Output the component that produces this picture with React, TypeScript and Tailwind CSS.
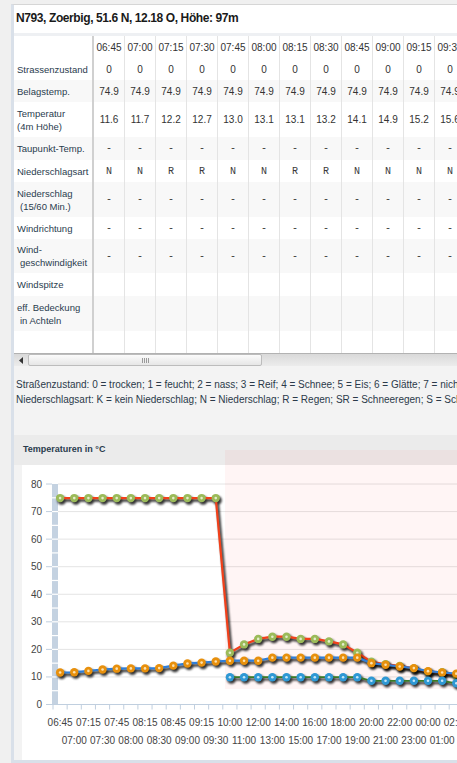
import React from "react";

const cols = ["06:45", "07:00", "07:15", "07:30", "07:45", "08:00", "08:15", "08:30", "08:45", "09:00", "09:15", "09:30", "09:45", "10:00"];

type Row = {
  label: React.ReactNode;
  h: string;
  values: string[];
  mono?: boolean;
  shaded: boolean;
};

const fill = (v: string) => cols.map(() => v);

const rows: Row[] = [
  { label: "Strassenzustand", h: "h-[22px]", values: fill("0"), shaded: false },
  { label: "Belagstemp.", h: "h-[22px]", values: fill("74.9"), shaded: true },
  {
    label: (
      <>
        Temperatur
        <br />
        (4m Höhe)
      </>
    ),
    h: "h-[35px]",
    values: ["11.6", "11.7", "12.2", "12.7", "13.0", "13.1", "13.1", "13.2", "14.1", "14.9", "15.2", "15.6", "15.8", "15.9"],
    shaded: false,
  },
  { label: "Taupunkt-Temp.", h: "h-[23px]", values: fill("-"), mono: true, shaded: true },
  {
    label: "Niederschlagsart",
    h: "h-[22px]",
    values: ["N", "N", "R", "R", "N", "N", "R", "R", "N", "N", "N", "N", "N", "N"],
    mono: true,
    shaded: false,
  },
  {
    label: (
      <>
        Niederschlag
        <br />
        <span className="pl-[3px]">(15/60 Min.)</span>
      </>
    ),
    h: "h-[35px]",
    values: fill("-"),
    mono: true,
    shaded: true,
  },
  { label: "Windrichtung", h: "h-[22px]", values: fill("-"), mono: true, shaded: false },
  {
    label: (
      <>
        Wind-
        <br />
        <span className="pl-[3px]">geschwindigkeit</span>
      </>
    ),
    h: "h-[34px]",
    values: fill("-"),
    mono: true,
    shaded: true,
  },
  { label: "Windspitze", h: "h-[23px]", values: fill(""), shaded: false },
  {
    label: (
      <>
        eff. Bedeckung
        <br />
        <span className="pl-[3px]">in Achteln</span>
      </>
    ),
    h: "h-[35px]",
    values: fill(""),
    shaded: true,
  },
  { label: "", h: "h-[22px]", values: fill(""), shaded: false },
];

function ForecastTable() {
  return (
    <div className="bg-white text-[#333]">
      <div className="flex h-[22px]">
        <div className="h-full w-[80px] shrink-0 border-r-2 border-[#d0d0d0]" />
        {cols.map((c) => (
          <div
            key={c}
            className="flex h-full w-[31px] shrink-0 items-center justify-center border-r border-[#e4e4e4] text-[10px]"
          >
            {c}
          </div>
        ))}
      </div>
      {rows.map((r, ri) => (
        <div key={ri} className={`flex ${r.h} ${r.shaded ? "bg-[#f8f8f8]" : "bg-white"}`}>
          <div className="flex h-full w-[80px] shrink-0 items-center whitespace-nowrap border-r-2 border-[#d0d0d0] pl-[3px] text-[9.5px] leading-[13px] text-[#2a3c4e]">
            <div>{r.label}</div>
          </div>
          {r.values.map((v, ci) => (
            <div
              key={ci}
              className={`flex h-full w-[31px] shrink-0 items-center justify-center border-r border-[#e4e4e4] ${
                r.mono ? "font-['Liberation_Mono',monospace] text-[10px] text-[#3a3a3a]" : "text-[10px]"
              }`}
            >
              {v}
            </div>
          ))}
        </div>
      ))}
    </div>
  );
}

function Scrollbar() {
  return (
    <div className="flex h-[13px] border-t border-[#b2b2b2] bg-gradient-to-b from-[#d9d9d9] to-[#ececec]">
      <div className="flex w-[14px] shrink-0 items-center justify-center">
        <svg width="4" height="7" viewBox="0 0 4 7">
          <path d="M4 0 L0 3.5 L4 7 Z" fill="#333" />
        </svg>
      </div>
      <div className="flex w-[234px] shrink-0 items-center justify-center gap-[1px] rounded-[2px] border border-[#bcbcbc] bg-gradient-to-b from-[#fbfbfb] to-[#e6e6e6]">
        <span className="h-[5px] w-[1px] bg-[#9a9a9a]" />
        <span className="h-[5px] w-[1px] bg-[#9a9a9a]" />
        <span className="h-[5px] w-[1px] bg-[#9a9a9a]" />
        <span className="h-[5px] w-[1px] bg-[#9a9a9a]" />
      </div>
    </div>
  );
}

function Legend() {
  return (
    <div className="h-[69px] whitespace-nowrap pl-[2px] pt-[11px] text-[10px] leading-[15px] text-[#2b3a4a]">
      <div>Straßenzustand: 0 = trocken; 1 = feucht; 2 = nass; 3 = Reif; 4 = Schnee; 5 = Eis; 6 = Glätte; 7 = nicht definiert</div>
      <div>Niederschlagsart: K = kein Niederschlag; N = Niederschlag; R = Regen; SR = Schneeregen; S = Schnee; G = Graupel</div>
    </div>
  );
}

const cats = [
  "06:45", "07:00", "07:15", "07:30", "07:45", "08:00", "08:15", "08:30", "08:45", "09:00", "09:15", "09:30",
  "10:00", "11:00", "12:00", "13:00", "14:00", "15:00", "16:00", "17:00", "18:00", "19:00", "20:00", "21:00",
  "22:00", "23:00", "00:00", "01:00", "02:00", "03:00",
];

const road: (number | null)[] = [
  ...Array(12).fill(74.9),
  18.8, 21.8, 23.8, 24.6, 24.6, 23.8, 23.8, 22.9, 21.8, 18.8, 15.5, 14.6, 14.0, 13.1, 11.9, 11.7, 10.6, 10.0,
];
const air: (number | null)[] = [
  11.6, 11.7, 12.2, 12.7, 13.0, 13.1, 13.1, 13.2, 14.1, 14.9, 15.2, 15.6,
  15.9, 15.9, 15.9, 17.0, 17.0, 17.0, 17.0, 17.0, 17.0, 17.0,
  15.0, 14.4, 13.8, 13.2, 12.1, 11.6, 11.2, 11.0,
];
const dew: (number | null)[] = [
  ...Array(12).fill(null),
  ...Array(10).fill(9.9),
  ...Array(6).fill(8.6),
  7.7, 7.5,
];

const X = (i: number) => 38.1 + 14.15 * i;
const Y = (v: number) => 239.5 - v * 2.756;

function Series({
  data,
  line,
  marker,
  dot,
  width,
}: {
  data: (number | null)[];
  line: string;
  marker: string;
  dot: string;
  width: number;
}) {
  const pts = data
    .map((v, i) => (v === null ? null : [X(i), Y(v)] as [number, number]))
    .filter((p): p is [number, number] => p !== null);
  const poly = pts.map((p) => `${p[0].toFixed(1)},${p[1].toFixed(1)}`).join(" ");
  return (
    <g>
      {/* soft dark shadow, offset down-right */}
      <g transform="translate(1.6 2.2)" filter="url(#soft)" opacity={0.8}>
        <polyline points={poly} fill="none" stroke="#000" strokeWidth={width + 0.6} strokeLinejoin="round" />
        {pts.map((p, i) => (
          <circle key={i} cx={p[0]} cy={p[1]} r={4.4} fill="#000" />
        ))}
      </g>
      <polyline points={poly} fill="none" stroke={line} strokeWidth={width} strokeLinejoin="round" />
      {pts.map((p, i) => (
        <g key={i}>
          <circle cx={p[0]} cy={p[1]} r={4.2} fill={marker} />
          <circle cx={p[0]} cy={p[1]} r={1.3} fill={dot} />
        </g>
      ))}
    </g>
  );
}

function TemperatureChart() {
  const grid = [0, 10, 20, 30, 40, 50, 60, 70, 80];
  const seps = Array.from({ length: 15 }, (_, j) => (j + 1) * 5);
  const ticks = Array.from({ length: 30 }, (_, k) => 31 + 14.15 * k);
  return (
    <svg width="435" height="295" viewBox="0 0 435 295" className="block">
      <defs>
        <filter id="soft" filterUnits="userSpaceOnUse" x="0" y="0" width="435" height="295">
          <feGaussianBlur stdDeviation="0.9" />
        </filter>
      </defs>

      {grid.slice(1).map((g) => (
        <line key={g} x1={36} x2={435} y1={Y(g)} y2={Y(g)} stroke="#e4e4e4" strokeWidth={1} />
      ))}

      <rect x={203} y={0} width={232} height={224} fill="#ff0000" opacity={0.04} />

      {grid.map((g) => (
        <g key={g}>
          <line x1={24} x2={30} y1={Y(g)} y2={Y(g)} stroke="#c0cfdf" strokeWidth={1} />
          <text
            x={20}
            y={Y(g) + 3.5}
            textAnchor="end"
            fontSize="10"
            fill="#444"
            fontFamily="'Liberation Sans', Arial, sans-serif"
          >
            {g}
          </text>
        </g>
      ))}

      <rect x={30} y={Y(80)} width={6} height={Y(0) - Y(80)} fill="#c4d2e1" />
      {seps.map((s) => (
        <line key={s} x1={30} x2={36} y1={Y(s)} y2={Y(s)} stroke="#fff" strokeWidth={1.2} />
      ))}

      <line x1={30} x2={435} y1={Y(0)} y2={Y(0)} stroke="#c0cfdf" strokeWidth={1} />
      {ticks.map((t, k) => (
        <line key={k} x1={t} x2={t} y1={Y(0)} y2={Y(0) + 5} stroke="#c0cfdf" strokeWidth={1} />
      ))}

      {cats.map((c, i) => (
        <text
          key={i}
          x={X(i)}
          y={i % 2 === 0 ? 260.5 : 278.5}
          textAnchor="middle"
          fontSize="10"
          fill="#444"
          fontFamily="'Liberation Sans', Arial, sans-serif"
        >
          {c}
        </text>
      ))}

      <Series data={road} line="#f2401a" marker="#9bbb59" dot="#e4edcc" width={2.2} />
      <Series data={air} line="#2f7ed8" marker="#e8900c" dot="#fde2b0" width={2.2} />
      <Series data={dew} line="#3a7a26" marker="#2f98d4" dot="#c6e6f7" width={1.8} />
    </svg>
  );
}

function ChartPanel() {
  return (
    <div className="relative">
      <div className="flex h-[30px] items-center bg-[#ebebeb] pl-[9px]">
        <span className="text-[9px] font-bold text-[#2a3b4d]">Temperaturen in °C</span>
      </div>
      <div className="pointer-events-none absolute left-[211px] top-[15px] h-[15px] w-[500px] bg-[rgba(255,0,0,0.04)]" />
      <div className="border-b-[3px] border-[#d9e0e9] pl-[8px]">
        <div className="bg-white">
          <TemperatureChart />
        </div>
      </div>
    </div>
  );
}

export default function App() {
  return (
    <div className="h-[763px] w-[457px] overflow-hidden bg-[#f0f0f0] font-['Liberation_Sans',Arial,sans-serif]">
      <div className="ml-[11px] mt-[4px] w-[640px] border-l-[3px] border-t border-l-[#d9e0e9] border-t-[#d6d6d6] bg-[#f3f3f3]">
        <div className="h-[28px] bg-white pl-[2px] pt-[6px]">
          <h1 className="whitespace-nowrap text-[12px] font-bold leading-[14px] tracking-[-0.4px] text-[#1a1a1a]">
            N793, Zoerbig, 51.6 N, 12.18 O, Höhe: 97m
          </h1>
        </div>
        <div className="h-[3px] bg-[#eef0f3]" />
        <ForecastTable />
        <Scrollbar />
        <Legend />
        <ChartPanel />
      </div>
    </div>
  );
}
